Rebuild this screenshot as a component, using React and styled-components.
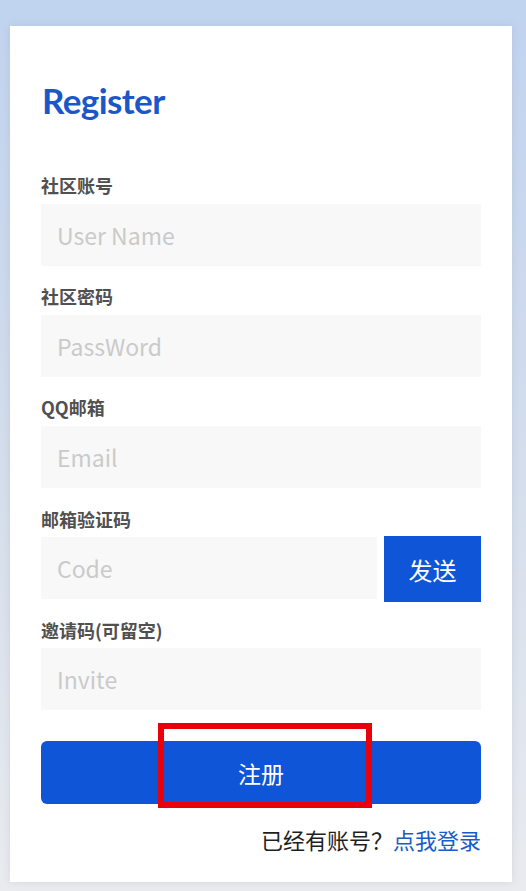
import React from "react";
import styled, { createGlobalStyle } from "styled-components";

const Global = createGlobalStyle`
  html, body { margin: 0; padding: 0; }
  body {
    min-height: 891px;
    background: linear-gradient(180deg, #c0d3ef 0%, #d3ddec 50%, #e9ebef 100%);
    font-family: "Noto Sans CJK SC", "Noto Sans", sans-serif;
  }
  * { box-sizing: border-box; }
`;

const Page = styled.div`
  padding: 26px 14px 9px 10px;
  min-height: 891px;
`;

const Card = styled.div`
  position: relative;
  background: #fff;
  height: 856px;
  padding: 50px 31px 0 31px;
  box-shadow: 0 0 8px rgba(120, 130, 150, 0.18);
  display: flex;
  flex-direction: column;
`;

const Title = styled.h1`
  margin: 0 0 49px 1px;
  font-family: "Lato", sans-serif;
  font-weight: 700;
  font-size: 35px;
  line-height: 48px;
  color: #1b57c9;
  letter-spacing: -0.6px;
`;

const Fields = styled.div`
  display: flex;
  flex-direction: column;
  gap: 18.7px;
`;

const Field = styled.div`
  display: flex;
  flex-direction: column;
`;

const Label = styled.label`
  font-size: 18px;
  line-height: 24px;
  font-weight: 700;
  color: #505050;
  margin-bottom: 6.5px;
`;

const Row = styled.div`
  display: flex;
  align-items: flex-start;
  gap: 7px;
`;

const Input = styled.input`
  flex: 1;
  min-width: 0;
  height: 62px;
  border: none;
  outline: none;
  background: #f8f8f8;
  padding: 0 16px;
  font-family: "Noto Sans CJK SC", sans-serif;
  font-size: 23px;
  color: #333;
  &::placeholder { color: #cacaca; }
`;

const SendButton = styled.button`
  width: 97px;
  height: 66px;
  margin: -1px 0 -3px;
  border: none;
  background: #0f55d8;
  color: #fff;
  font-family: "Noto Sans CJK SC", sans-serif;
  font-size: 24px;
  padding: 0;
`;

const Submit = styled.button`
  margin-top: 31px;
  height: 63px;
  border: none;
  border-radius: 6px;
  background: #0f55d8;
  color: #fff;
  font-family: "Noto Sans CJK SC", sans-serif;
  font-size: 23px;
  padding: 0;
`;

const Footer = styled.div`
  margin-top: 23px;
  text-align: right;
  font-size: 22px;
  line-height: 24px;
  color: #1e1e1e;
`;

const Link = styled.a`
  color: #1a5bc9;
  text-decoration: none;
`;

const Highlight = styled.div`
  position: absolute;
  left: 148px;
  top: 697px;
  width: 214px;
  height: 85px;
  border: 6px solid #e8000b;
  pointer-events: none;
`;

const fields = [
  { label: "社区账号", placeholder: "User Name" },
  { label: "社区密码", placeholder: "PassWord" },
  { label: "QQ邮箱", placeholder: "Email" },
  { label: "邮箱验证码", placeholder: "Code", send: true },
  { label: "邀请码(可留空)", placeholder: "Invite" },
];

export default function App() {
  return (
    <>
      <Global />
      <Page>
        <Card>
          <Title>Register</Title>
          <Fields>
            {fields.map((f) => (
              <Field key={f.label}>
                <Label>{f.label}</Label>
                <Row>
                  <Input placeholder={f.placeholder} />
                  {f.send && <SendButton>发送</SendButton>}
                </Row>
              </Field>
            ))}
          </Fields>
          <Submit>注册</Submit>
          <Footer>
            已经有账号？<Link href="#">点我登录</Link>
          </Footer>
          <Highlight />
        </Card>
      </Page>
    </>
  );
}
